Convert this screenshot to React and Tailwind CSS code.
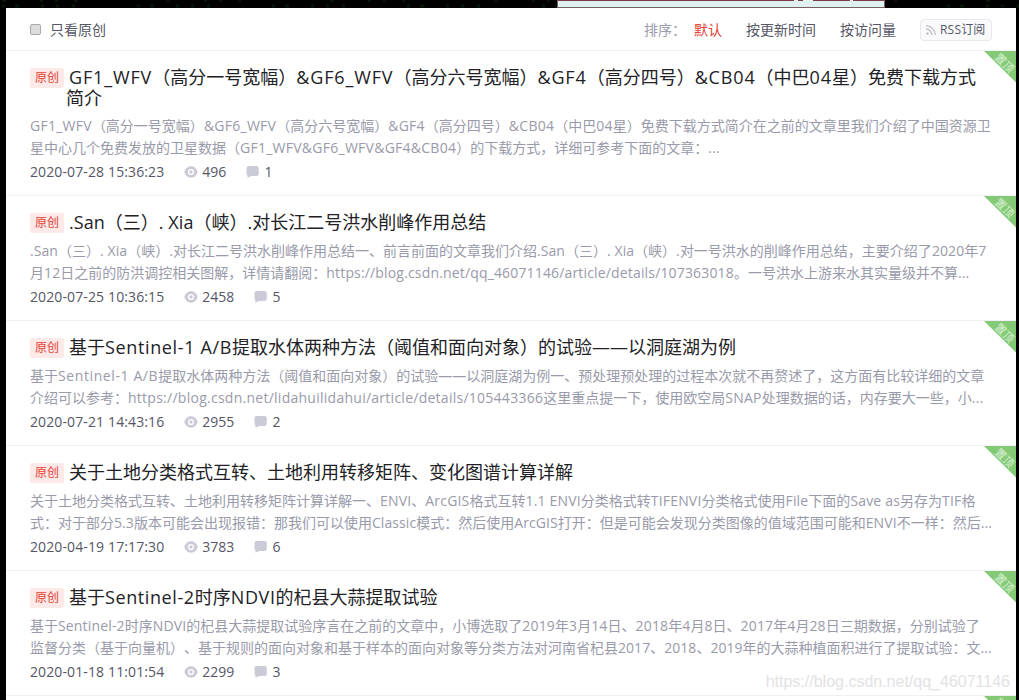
import { Fragment } from "react";

const articles = [
  {
    title: [
      ["GF1_WFV（高分一号宽幅）&GF6_WFV（高分六号宽幅）&GF4（高分四号）&CB04（中巴04星）免费下载方式", "tracking-[0.86px]"],
      ["简介", "tracking-[0.12px]"],
    ],
    content: [
      ["GF1_WFV（高分一号宽幅）&GF6_WFV（高分六号宽幅）&GF4（高分四号）&CB04（中巴04星）免费下载方式简介在之前的文章里我们介绍了中国资源卫", "tracking-[0.26px]"],
      ["星中心几个免费发放的卫星数据（GF1_WFV&GF6_WFV&GF4&CB04）的下载方式，详细可参考下面的文章：...", "tracking-[0.26px]"],
    ],
    date: "2020-07-28 15:36:23",
    views: "496",
    comments: "1",
  },
  {
    title: [[".San（三）. Xia（峡）.对长江二号洪水削峰作用总结", "tracking-[0.05px]"]],
    content: [
      [".San（三）. Xia（峡）.对长江二号洪水削峰作用总结一、前言前面的文章我们介绍.San（三）. Xia（峡）.对一号洪水的削峰作用总结，主要介绍了2020年7", "tracking-[0.08px]"],
      ["月12日之前的防洪调控相关图解，详情请翻阅：https://blog.csdn.net/qq_46071146/article/details/107363018。一号洪水上游来水其实量级并不算...", "tracking-[0.16px]"],
    ],
    date: "2020-07-25 10:36:15",
    views: "2458",
    comments: "5",
  },
  {
    title: [["基于Sentinel-1 A/B提取水体两种方法（阈值和面向对象）的试验——以洞庭湖为例", "tracking-[0.64px]"]],
    content: [
      ["基于Sentinel-1 A/B提取水体两种方法（阈值和面向对象）的试验——以洞庭湖为例一、预处理预处理的过程本次就不再赘述了，这方面有比较详细的文章", "tracking-[0.6px]"],
      ["介绍可以参考：https://blog.csdn.net/lidahuilidahui/article/details/105443366这里重点提一下，使用欧空局SNAP处理数据的话，内存要大一些，小...", "tracking-[0.26px]"],
    ],
    date: "2020-07-21 14:43:16",
    views: "2955",
    comments: "2",
  },
  {
    title: [["关于土地分类格式互转、土地利用转移矩阵、变化图谱计算详解", "tracking-[0.12px]"]],
    content: [
      ["关于土地分类格式互转、土地利用转移矩阵计算详解一、ENVI、ArcGIS格式互转1.1 ENVI分类格式转TIFENVI分类格式使用File下面的Save as另存为TIF格", "tracking-[0.18px]"],
      ["式：对于部分5.3版本可能会出现报错：那我们可以使用Classic模式：然后使用ArcGIS打开：但是可能会发现分类图像的值域范围可能和ENVI不一样：然后...", "tracking-[0.08px]"],
    ],
    date: "2020-04-19 17:17:30",
    views: "3783",
    comments: "6",
  },
  {
    title: [["基于Sentinel-2时序NDVI的杞县大蒜提取试验", "tracking-[0.6px]"]],
    content: [
      ["基于Sentinel-2时序NDVI的杞县大蒜提取试验序言在之前的文章中，小博选取了2019年3月14日、2018年4月8日、2017年4月28日三期数据，分别试验了", "tracking-[0.16px]"],
      ["监督分类（基于向量机）、基于规则的面向对象和基于样本的面向对象等分类方法对河南省杞县2017、2018、2019年的大蒜种植面积进行了提取试验：文...", "tracking-[0.04px]"],
    ],
    date: "2020-01-18 11:01:54",
    views: "2299",
    comments: "3",
  },
];

// Latin runs get their own spacing next to the Chinese text
function Mixed({ text, tracking = "tracking-[0.12px]" }) {
  return text.split(/([\x20-\x7e]+)/).map((part, i) =>
    i % 2 ? (
      <span key={i} className={tracking}>{part}</span>
    ) : (
      <Fragment key={i}>{part}</Fragment>
    )
  );
}

function Ribbon() {
  return (
    <svg className="absolute top-0 right-0" width="32" height="32" viewBox="0 0 32 32">
      <path d="M0 0H32V31.5Z" fill="#84ca76" />
      <text
        x="21"
        y="11.5"
        fontSize="11"
        fill="#d9f0d4"
        textAnchor="middle"
        dominantBaseline="central"
        transform="rotate(45 21 11.5)"
      >
        置顶
      </text>
    </svg>
  );
}

function EyeIcon() {
  return (
    <svg width="14" height="14" viewBox="0 0 14 14">
      <path d="M7 1.3C3.600 1.300 1.200 4 .3 7c.9 3 3.300 5.700 6.700 5.700S12.800 10 13.700 7C12.800 4 10.400 1.300 7 1.300Z" fill="#cbcbd8" />
      <circle cx="7" cy="7" r="3.100" fill="#fff" />
      <circle cx="7" cy="7" r="1.700" fill="#cbcbd8" />
    </svg>
  );
}

function CommentIcon() {
  return (
    <svg width="14" height="14" viewBox="0 0 14 14">
      <path d="M3 .9h7.500a2.300 2.300 0 0 1 2.300 2.300v5.600a2.300 2.300 0 0 1-2.300 2.300H5.200L1.500 12.800V10.500A2.300 2.300 0 0 1 .5 8.600V3.200A2.300 2.300 0 0 1 3 .9Z" fill="#cbcbd8" />
    </svg>
  );
}

function Article({ article }) {
  return (
    <div className="relative border-b border-[#f0f0f2] px-6 pt-4 pb-3">
      <Ribbon />
      <div className="flex items-start">
        <span className="mt-px mr-0.5 -mb-px h-5 w-[34px] shrink-0 rounded-xs bg-[#fde9e8] text-center text-xs leading-5 text-[#e33e33]">原创</span>
        <h4 className="indent-[3px] text-lg leading-5 font-normal text-[#222226]">
          {article.title.map(([line, tracking], i) => (
            <div key={line} className={i ? "mt-px -mb-px indent-0" : ""}><Mixed text={line} tracking={tracking} /></div>
          ))}
        </h4>
      </div>
      <div className="mt-2 text-sm leading-[22px] text-[#999aaa]">
        {article.content.map(([line, tracking]) => (
          <p key={line}><Mixed text={line} tracking={tracking} /></p>
        ))}
      </div>
      <div className="mt-0.5 flex gap-5 text-sm leading-[22px] text-[#555666]">
        <span><Mixed text={article.date} /></span>
        <span className="flex items-center gap-1"><EyeIcon />{article.views}</span>
        <span className="flex items-center gap-1"><CommentIcon />{article.comments}</span>
      </div>
    </div>
  );
}

export default function App() {
  return (
    <div className="relative flex h-[700px] w-[1019px] flex-col overflow-hidden whitespace-nowrap bg-black font-['Open_Sans','Noto_Sans_CJK_SC',sans-serif] font-normal [text-spacing-trim:space-all]">
      <svg className="h-2 w-[1019px] shrink-0" viewBox="0 0 1019 8">
        {/* faint specks of the code rain behind the card */}
        <g stroke="#06170a" strokeWidth="3" fill="none">
          <path d="M2 .5H1019" strokeDasharray="4 34 3 12 3 16 3 89" />
          <path d="M2 6H1019" strokeDasharray="3 10 4 22 3 12 3 13 3 62" />
        </g>
        <rect x="557" width="328" height="8" fill="#e0efef" />
        <path d="M557 .5H794M798 .5H803M813 .5H850M853 .5H885" stroke="#7b3c48" />
        <path d="M557 7.500H885M557.500 0V8M884.500 0V8" stroke="#776064" />
      </svg>
      <div className="ml-1.5 w-[1010px] bg-white">
        <div className="flex h-[43px] items-center border-b border-[#f0f0f2] px-6 text-sm text-[#555666]">
          <span className="h-[11px] w-[11px] rounded-xs border border-[#a9a9a9] bg-[#dddddd]"></span>
          <span className="ml-[9px] pt-0.5">只看原创</span>
          <span className="ml-auto pt-px text-[#999aaa]">排序：</span>
          <span className="ml-2 pt-px text-[#e33e33]">默认</span>
          <span className="ml-6 pt-px">按更新时间</span>
          <span className="ml-6 pt-px">按访问量</span>
          <span className="mt-px ml-6 flex h-[22px] w-[72px] items-center rounded-sm border border-[#e8e8ed] bg-[#fafafc] pl-[5px] text-xs">
            <svg className="mr-1 shrink-0" width="10" height="10" viewBox="0 0 10 10" fill="none" stroke="#c4c4cc" strokeWidth="1.500">
              <path d="M0 .8A9.200 9.200 0 0 1 9.200 10M0 4.100A5.900 5.900 0 0 1 5.900 10" />
              <circle cx="1.400" cy="8.600" r="1.400" fill="#c4c4cc" stroke="none" />
            </svg>
            <Mixed text="RSS订阅" tracking="tracking-[0.2px]" />
          </span>
        </div>
        {articles.map((article) => (
          <Article key={article.date} article={article} />
        ))}
        <div className="relative h-8"><Ribbon /></div>
      </div>
      <div className="absolute right-[9px] bottom-1.5 font-['Liberation_Sans',sans-serif] text-base leading-6 text-[#e2e2e4]">
        https://blog.csdn.net/qq_46071146
      </div>
    </div>
  );
}
